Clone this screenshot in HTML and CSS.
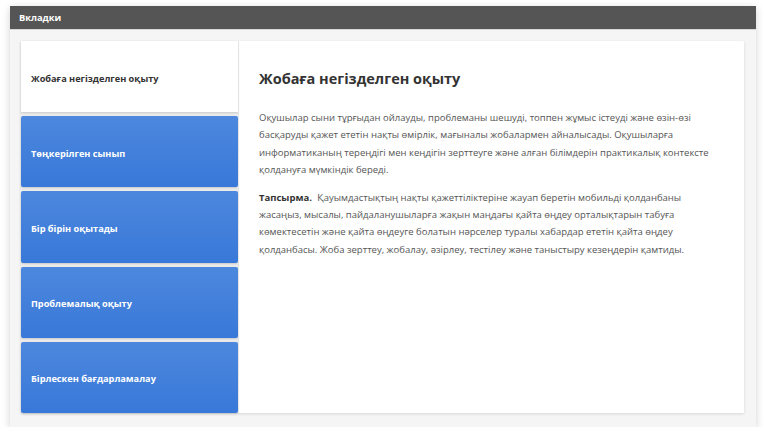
FILE: index.html
```html
<!DOCTYPE html>
<html lang="kk">
<head>
<meta charset="utf-8">
<title>Вкладки</title>
<link rel="stylesheet" href="styles.css">
</head>
<body>
<div class="panel">
  <div class="panel-header">Вкладки</div>
  <div class="panel-body">
    <div class="card">
      <div class="tabs">
        <div class="tab active">Жобаға негізделген оқыту</div>
        <div class="tab">Төңкерілген сынып</div>
        <div class="tab">Бір бірін оқытады</div>
        <div class="tab">Проблемалық оқыту</div>
        <div class="tab">Бірлескен бағдарламалау</div>
      </div>
      <div class="content">
        <h2 class="title">Жобаға негізделген оқыту</h2>
        <p class="text">Оқушылар сыни тұрғыдан ойлауды, проблеманы шешуді, топпен жұмыс істеуді және өзін-өзі басқаруды қажет ететін нақты өмірлік, мағыналы жобалармен айналысады. Оқушыларға информатиканың тереңдігі мен кеңдігін зерттеуге және алған білімдерін практикалық контексте қолдануға мүмкіндік береді.</p>
        <p class="text"><b class="label">Тапсырма.</b> Қауымдастықтың нақты қажеттіліктеріне жауап беретін мобильді қолданбаны жасаңыз, мысалы, пайдаланушыларға жақын маңдағы қайта өңдеу орталықтарын табуға көмектесетін және қайта өңдеуге болатын нәрселер туралы хабардар ететін қайта өңдеу қолданбасы. Жоба зерттеу, жобалау, әзірлеу, тестілеу және таныстыру кезеңдерін қамтиды.</p>
      </div>
    </div>
  </div>
</div>
</body>
</html>
```

FILE: styles.css
```css
html, body {
  margin: 0;
  padding: 0;
  background: #ffffff;
}
body {
  font-family: "Open Sans", "Noto Sans", sans-serif;
}
.panel {
  margin: 6px 8px 0 10px;
  width: 746px;
  box-shadow: 0 2px 8px rgba(0,0,0,0.18);
}
.panel-header {
  background: #555555;
  color: #ffffff;
  font-weight: 700;
  font-size: 9.3px;
  height: 23px;
  line-height: 23px;
  padding-left: 9px;
  border-bottom: 1px solid #d8d8d8;
}
.panel-body {
  background: #f5f5f5;
  padding: 11px 12px 14px 11px;
}
.card {
  display: flex;
  background: #ffffff;
  box-shadow: 0 1px 3px rgba(0,0,0,0.12);
  height: 372px;
}
.tabs {
  width: 217px;
  flex: none;
  display: flex;
  flex-direction: column;
  gap: 4px;
  background: #ececec;
}
.tab {
  flex: 1;
  display: flex;
  align-items: center;
  padding: 3px 0 0 10px;
  font-size: 9.2px;
  font-weight: 700;
  color: #ffffff;
  background: linear-gradient(#4d88de, #3878d8);
  border-radius: 2px;
  box-shadow: 0 1px 2px rgba(0,0,0,0.15);
}
.tab.active {
  background: #ffffff;
  color: #333333;
  border-radius: 0;
}
.content {
  flex: 1;
  padding: 28px 22px 0 20px;
  border-left: 1px solid #e4e4e4;
}
.title {
  margin: 0 0 20px 0;
  font-size: 14.5px;
  line-height: 20px;
  font-weight: 700;
  color: #333333;
}
.text {
  margin: 0 0 10px 0;
  font-size: 9.5px;
  line-height: 17.4px;
  color: #555555;
}
.label {
  color: #333333;
  margin-right: 3px;
}
```
